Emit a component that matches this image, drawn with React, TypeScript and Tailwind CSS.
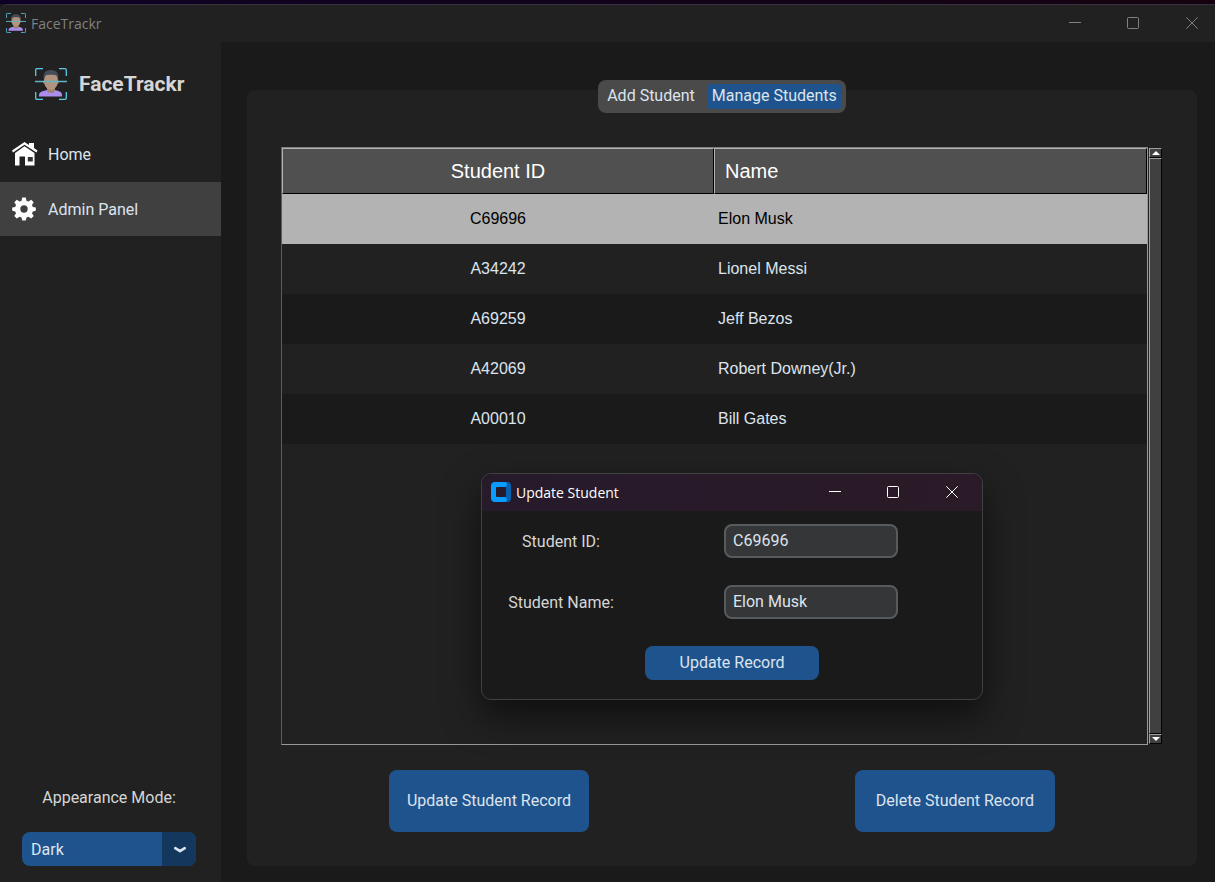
import React, {useState} from 'react';

interface Student {
    id: string;
    name: string;
}

const students: Student[] = [
    {id: 'C69696', name: 'Elon Musk'},
    {id: 'A34242', name: 'Lionel Messi'},
    {id: 'A69259', name: 'Jeff Bezos'},
    {id: 'A42069', name: 'Robert Downey(Jr.)'},
    {id: 'A00010', name: 'Bill Gates'},
];

const FaceLogo: React.FC<{className: string}> = ({className}) => (
    <svg className={className} viewBox="0 0 32 32" fill="none" aria-hidden="true">
        <path d="M4 28.500V27c0-3 4-4 8-5h8c4 1 7 2 7 5v1.500z" fill="#ab8df0"/>
        <path d="M12 18h8v5c-1 2.600-7 2.600-8 0z" fill="#9c8170"/>
        <path d="M9 7c0-3 14-3 14 0v5.500c1.200 0 1.200 3-.3 3C22 19 19 22 16 22s-6-3-6.700-6.500c-1.500 0-1.500-3-.3-3z" fill="#b2937e"/>
        <path d="M9 12.500C7.800 6 9.500 2 16 2s8.200 4 7 10.500C22.500 9 22 7.500 20 7c-2-.5-6-.5-8 0-2 .5-2.500 2-3 5.500z" fill="#454b59"/>
        <path d="M0 13.500h32" stroke="#62b6c4" strokeWidth="1.500"/>
        <path d="M.7 8V2Q.7.700 2 .7h6M24 .7h6q1.300 0 1.300 1.300v6M31.300 24v6q0 1.300-1.300 1.300h-6M8 31.300H2Q.7 31.300.7 30v-6" stroke="#5cc9e6" strokeWidth="1.300"/>
    </svg>
);

const HomeIcon: React.FC = () => (
    <svg className="w-[26px] h-6" viewBox="0 0 26 24" aria-hidden="true">
        <path d="M12.500 0 17 3V1h5v5l3.500 2.500-1 2L12.500 2.800 1 10.500 0 8.500z" fill="#fff"/>
        <path d="M12.500 4.200 22.500 11v12.500H13v-9H7.500v9H3V11z" fill="#fff"/>
        <path d="M15.800 15h5v4.500h-5z" fill="#333"/>
    </svg>
);

const GearIcon: React.FC = () => (
    <svg className="w-6 h-6" viewBox="0 0 24 24" aria-hidden="true">
        <path
            fill="#fff"
            fillRule="evenodd"
            d="M10.200.5h3.600l.7 3.200 1.900.8 2.800-1.700 2.500 2.500L20 8.100l.8 1.900 3 .5v3.200l-3 .7-.8 1.900 1.700 2.600-2.500 2.500-2.800-1.600-1.900.8-.7 2.900h-3.600l-.7-2.900-1.900-.8-2.800 1.600-2.500-2.500L4 16.300l-.8-1.900-3-.7v-3.200l3-.5.8-1.900-1.700-2.800 2.500-2.500 2.800 1.700 1.900-.8zM12 8.300a3.700 3.700 0 1 0 0 7.400 3.700 3.700 0 0 0 0-7.400z"
        />
    </svg>
);

const WindowButtons: React.FC<{className?: string}> = ({className}) => (
    <div className={`flex ${className ?? ''}`}>
        <button className="w-[58px] flex justify-center" aria-label="Minimize">
            <svg className="w-3 h-3" viewBox="0 0 12 12" stroke="currentColor" fill="none">
                <path d="M0 5.500h12"/>
            </svg>
        </button>
        <button className="w-[58px] flex justify-center" aria-label="Maximize">
            <svg className="w-3 h-3" viewBox="0 0 12 12" stroke="currentColor" fill="none">
                <rect x=".5" y=".5" width="11" height="11" rx="1"/>
            </svg>
        </button>
        <button className="w-[60px] flex justify-center" aria-label="Close">
            <svg className="w-3 h-3" viewBox="0 0 12 12" stroke="currentColor" fill="none">
                <path d="M.3.300l11.400 11.400M11.700.3.300 11.700"/>
            </svg>
        </button>
    </div>
);

const Sidebar: React.FC = () => {
    const [mode, setMode] = useState<string>('Dark');

    return (
        <aside className="w-[221px] shrink-0 flex flex-col bg-[#212121]">
            <div className="flex items-center gap-3 pl-[35px] h-[84px]">
                <FaceLogo className="w-8 h-8"/>
                <h1 className="text-[21px] leading-8 pb-px font-bold text-[#d6d6d6]">FaceTrackr</h1>
            </div>

            <nav className="flex flex-col">
                <button className="flex items-center gap-[10px] h-14 pl-3">
                    <HomeIcon/>
                    <span className="pt-[2px]">Home</span>
                </button>
                <button className="flex items-center gap-3 h-[54px] pl-3 bg-[#404040]">
                    <GearIcon/>
                    <span className="pt-[2px]">Admin Panel</span>
                </button>
            </nav>

            <div className="mt-auto ml-[22px] mb-4 w-[174px] flex flex-col gap-[22px]">
                <label htmlFor="appearance" className="text-center text-[#d6d6d6]">Appearance Mode:</label>
                <div className="relative">
                    <select
                        id="appearance"
                        className="block w-full h-[34px] pl-[9px] pt-[2px] rounded-lg bg-[#1f538d] appearance-none"
                        value={mode}
                        onChange={(e) => setMode(e.target.value)}
                    >
                        <option>Dark</option>
                        <option>Light</option>
                        <option>System</option>
                    </select>
                    <span className="absolute right-0 top-0 w-[34px] h-full pl-[2px] pt-px rounded-r-lg bg-[#14375e] flex items-center justify-center pointer-events-none">
                        <svg className="w-3 h-2" viewBox="0 0 12 8" fill="none" stroke="#dce4ee" strokeWidth="2.600" strokeLinecap="round" strokeLinejoin="round">
                            <path d="M1.300 2.200 6 5.200l4.700-3"/>
                        </svg>
                    </span>
                </div>
            </div>
        </aside>
    );
};

const StudentTable: React.FC<{selected: string; onSelect: (id: string) => void}> = ({selected, onSelect}) => (
    <div className="flex-1 flex ml-[34px] mr-[35px] gap-px font-['Liberation_Sans',sans-serif]">
        <div className="flex-1 border border-t-[#808080] border-l-[#5c5c5c] border-r-[#999] border-b-[#999]">
            <table className="w-full table-fixed border-separate border-spacing-0">
                <thead>
                    <tr className="h-[46px] bg-[#505050] text-white text-[20px]">
                        <th className="w-[432px] p-0 font-normal border border-t-[#b3b3b3] border-l-[#b3b3b3] border-r-black border-b-black">Student ID</th>
                        <th className="p-0 pl-[10px] font-normal text-left border border-t-[#b3b3b3] border-l-[#b3b3b3] border-r-black border-b-black">Name</th>
                    </tr>
                </thead>
                <tbody>
                    {students.map((student, index) => (
                        <tr
                            key={student.id}
                            className={`h-[50px] ${
                                student.id === selected ? 'bg-[#b3b3b3] text-black' :
                                    index % 2 === 0 ? 'bg-[#1a1a1a] text-[#dce4ee]' : 'bg-[#212121] text-[#dce4ee]'
                            }`}
                            onClick={() => onSelect(student.id)}
                        >
                            <td className="p-0 text-center">{student.id}</td>
                            <td className="p-0 pl-1">{student.name}</td>
                        </tr>
                    ))}
                </tbody>
            </table>
        </div>
        <div className="w-[13px] pt-px flex flex-col">
            <button className="h-[10px] flex items-center justify-center bg-[#404040] border border-t-[#a0a0a0] border-l-[#a0a0a0] border-r-black border-b-black" aria-label="Scroll up">
                <svg className="w-2 h-1" viewBox="0 0 8 4" fill="#fff"><path d="M4 0l4 4H0z"/></svg>
            </button>
            <div className="flex-1 bg-[#404040] border border-t-[#a0a0a0] border-l-[#a0a0a0] border-r-black border-b-black"/>
            <button className="h-[10px] mb-px flex items-center justify-center bg-[#404040] border border-t-[#a0a0a0] border-l-[#a0a0a0] border-r-black border-b-black" aria-label="Scroll down">
                <svg className="w-2 h-1" viewBox="0 0 8 4" fill="#fff"><path d="M4 4L0 0h8z"/></svg>
            </button>
        </div>
    </div>
);

const UpdateDialog: React.FC<{student: Student}> = ({student}) => {
    const [id, setId] = useState<string>(student.id);
    const [name, setName] = useState<string>(student.name);

    return (
        <div
            role="dialog"
            aria-label="Update Student"
            className="absolute left-[481px] top-[473px] w-[502px] rounded-[10px] border border-[#414141] bg-[#1a1a1a] overflow-hidden shadow-[0_16px_36px_rgba(0,0,0,0.55)]"
        >
            <div className="h-[37px] pl-[9px] pb-px flex items-center justify-between text-white bg-linear-to-r from-[#261a2b] to-[#2b1a27]">
                <div className="flex items-center gap-[5px]">
                    <svg className="w-5 h-5" viewBox="0 0 20 20" aria-hidden="true">
                        <path d="M10 0h6a4 4 0 0 1 4 4v12a4 4 0 0 1-4 4h-6z" fill="#0560b0"/>
                        <path d="M4 0h10q2 0 2 2.500T14 5v10q2 0 2 2.500T14 20H4a4 4 0 0 1-4-4V4a4 4 0 0 1 4-4z" fill="#0a9bff"/>
                        <rect x="5" y="5" width="10" height="10" rx="1" fill="#271a2b"/>
                    </svg>
                    <span className="font-['Open_Sans',sans-serif] text-[14px]">Update Student</span>
                </div>
                <WindowButtons/>
            </div>
            <form className="pt-[13px] pb-[19px] flex flex-col gap-[27px]" onSubmit={(e) => e.preventDefault()}>
                <div className="grid grid-cols-[158px_1fr] items-center justify-items-center">
                    <label htmlFor="studentId" className="pt-[2px] text-[#d6d6d6]">Student ID:</label>
                    <input
                        id="studentId"
                        className="w-[174px] h-[34px] px-[7px] pb-[2px] rounded-lg border-2 border-[#565b5e] bg-[#343638]"
                        value={id}
                        onChange={(e) => setId(e.target.value)}
                    />
                </div>
                <div className="grid grid-cols-[158px_1fr] items-center justify-items-center">
                    <label htmlFor="studentName" className="pt-[2px] text-[#d6d6d6]">Student Name:</label>
                    <input
                        id="studentName"
                        className="w-[174px] h-[34px] px-[7px] pb-[2px] rounded-lg border-2 border-[#565b5e] bg-[#343638]"
                        value={name}
                        onChange={(e) => setName(e.target.value)}
                    />
                </div>
                <button type="submit" className="self-center w-[174px] h-[34px] rounded-lg bg-[#1f538d]">
                    Update Record
                </button>
            </form>
        </div>
    );
};

const App: React.FC = () => {
    const [selected, setSelected] = useState<string>('C69696');

    return (
        <div className="relative min-h-screen flex flex-col bg-[#1a1a1a] text-[#dce4ee] text-base font-['Roboto',sans-serif]">
            <div className="h-1 bg-linear-to-r from-[#0d0226] to-[#16020f]"/>
            <header className="h-[38px] pl-[6px] pb-px flex items-center justify-between bg-[#212121] border-t border-[#38323f] rounded-tl-lg text-[#808080]">
                <div className="flex items-center gap-[5px]">
                    <FaceLogo className="w-5 h-5"/>
                    <span className="font-['Open_Sans',sans-serif] text-[14px]">FaceTrackr</span>
                </div>
                <WindowButtons className="-mr-[7px]"/>
            </header>

            <div className="flex-1 flex overflow-hidden">
                <Sidebar/>
                <main className="flex-1 flex flex-col pt-12 pl-[26px] pr-[18px] pb-4">
                    <section className="flex-1 flex flex-col rounded-lg bg-[#212121] pb-[34px]">
                        <div className="self-center -mt-[10px] mb-[34px] h-[33px] p-1 flex rounded-lg bg-[#4a4a4a]">
                            <button className="h-[25px] pl-[5px] pr-3 pb-[2px] rounded-md flex items-center">Add Student</button>
                            <button className="h-[25px] px-[5px] pb-[2px] rounded-sm bg-[#1f538d] flex items-center">Manage Students</button>
                        </div>

                        <StudentTable selected={selected} onSelect={setSelected}/>

                        <div className="mt-[25px] px-[9px] grid grid-cols-2 justify-items-center">
                            <button className="w-[200px] h-[62px] rounded-lg bg-[#1f538d]">Update Student Record</button>
                            <button className="w-[200px] h-[62px] rounded-lg bg-[#1f538d]">Delete Student Record</button>
                        </div>
                    </section>
                </main>
            </div>

            <UpdateDialog student={students[0]}/>
        </div>
    );
};

export default App;
